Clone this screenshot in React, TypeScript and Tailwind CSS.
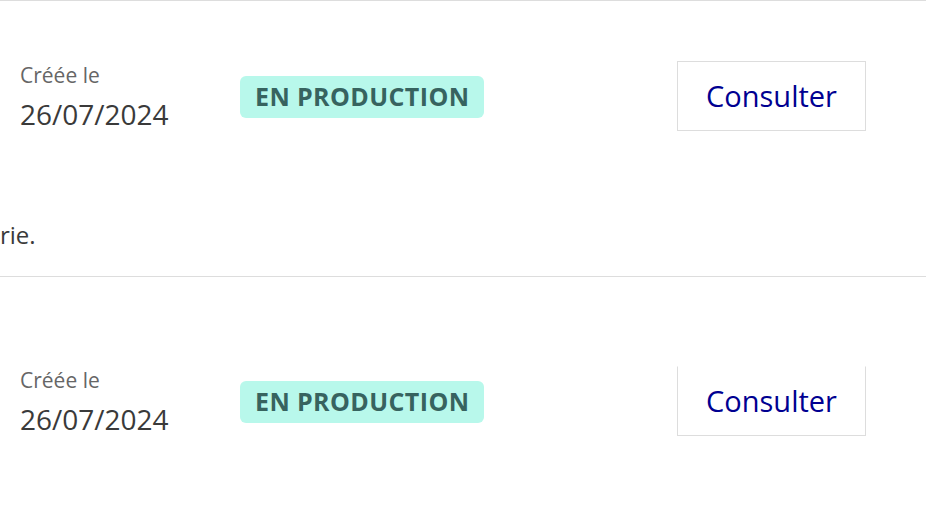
export default function App() {
  const Row = ({ top, noTopBorder }: { top: string; noTopBorder?: boolean }) => (
    <div className={`flex items-center ${top}`}>
      <div className="w-[240px] pl-5 mt-[1px] flex flex-col">
        <span className="text-[21px] leading-[24px] text-[#666666]">Créée le</span>
        <span className="text-[28px] leading-[32px] text-[#3a3a3a] mt-[11px]">26/07/2024</span>
      </div>
      <div className="flex-1 mt-[2px]">
        <span className="inline-flex items-center h-[42px] px-[15px] rounded-[6px] bg-[#b8f8eb] text-[#37635f] font-bold text-[25px] tracking-[0.4px]">
          EN PRODUCTION
        </span>
      </div>
      <button
        className={`w-[189px] h-[70px] mr-[60px] border border-[#dddddd] ${noTopBorder ? "border-t-transparent" : ""} bg-white text-[#000091] text-[29px] flex items-center justify-center`}
      >
        Consulter
      </button>
    </div>
  );

  return (
    <div className="w-[926px] h-[510px] bg-white overflow-hidden" style={{ fontFamily: "'Open Sans', 'Noto Sans', sans-serif" }}>
      <div className="border-t border-[#dddddd]">
        <Row top="pt-[60px]" />
        <p className="mt-[88px] text-[24px] leading-[32px] text-[#3a3a3a]">rie.</p>
      </div>
      <div className="border-t border-[#dddddd] mt-[25px]">
        <Row top="pt-[89px]" noTopBorder />
      </div>
    </div>
  );
}
